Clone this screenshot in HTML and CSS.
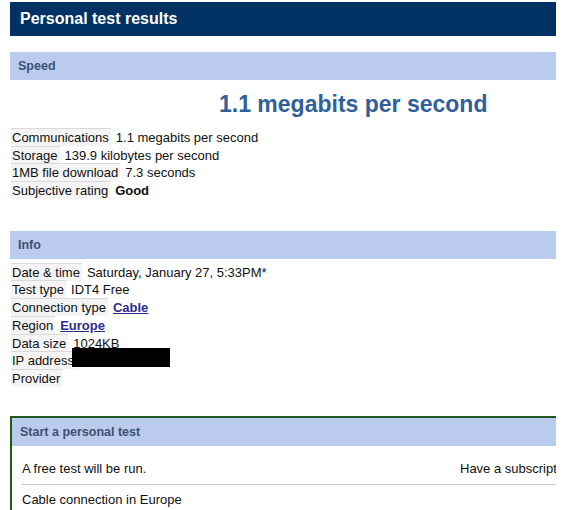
FILE: index.html
```html
<!DOCTYPE html>
<html>
<head>
<meta charset="utf-8">
<link rel="stylesheet" href="styles.css">
</head>
<body>
<div class="page">
  <div class="title">Personal test results</div>

  <div class="section-head">Speed</div>
  <div class="big">1.1 megabits per second</div>
  <div class="rows">
    <div class="row"><span class="label">Communications</span><span class="value">1.1 megabits per second</span></div>
    <div class="row"><span class="label">Storage</span><span class="value">139.9 kilobytes per second</span></div>
    <div class="row"><span class="label">1MB file download</span><span class="value">7.3 seconds</span></div>
    <div class="row"><span class="label">Subjective rating</span><span class="value strong">Good</span></div>
  </div>

  <div class="section-head info-head">Info</div>
  <div class="rows info-rows">
    <div class="row"><span class="label">Date &amp; time</span><span class="value">Saturday, January 27, 5:33PM*</span></div>
    <div class="row"><span class="label">Test type</span><span class="value">IDT4 Free</span></div>
    <div class="row"><span class="label">Connection type</span><span class="value"><a class="link" href="#">Cable</a></span></div>
    <div class="row"><span class="label">Region</span><span class="value"><a class="link" href="#">Europe</a></span></div>
    <div class="row"><span class="label">Data size</span><span class="value">1024KB</span></div>
    <div class="row ip-row"><span class="label">IP address</span><span class="redact"></span></div>
    <div class="row"><span class="label">Provider</span></div>
  </div>

  <div class="start-box">
    <div class="section-head start-head">Start a personal test</div>
    <div class="start-body">
      <div class="start-line first">
        <div class="start-left">A free test will be run.</div>
        <div class="start-right">Have a subscription?</div>
      </div>
      <div class="start-line">
        <div class="start-left">Cable connection in Europe</div>
      </div>
    </div>
  </div>
</div>
</body>
</html>
```

FILE: styles.css
```css
html, body {
  margin: 0;
  padding: 0;
  background: #ffffff;
}

body {
  font-family: "Liberation Sans", Arial, sans-serif;
  font-size: 13px;
  color: #111111;
}

.page {
  margin: 2px 0 0 10px;
  width: 546px;
  height: 508px;
  overflow: hidden;
}

.title {
  background: #023263;
  color: #ffffff;
  font-weight: bold;
  font-size: 16px;
  height: 34px;
  line-height: 34px;
  padding-left: 10px;
}

.section-head {
  margin-top: 16px;
  background: #bacbed;
  color: #3d5273;
  font-weight: bold;
  font-size: 12.5px;
  height: 28px;
  line-height: 28px;
  padding-left: 8px;
}

.big {
  color: #30609a;
  font-weight: bold;
  font-size: 23px;
  line-height: 30px;
  padding: 9px 0 9px 209px;
}

.rows {
  display: flex;
  flex-direction: column;
}

.row {
  position: relative;
  height: 17.7px;
  white-space: nowrap;
}

.label {
  display: inline-block;
  margin-left: 1px;
  padding: 1px 2px 0 1px;
  line-height: 16px;
  background: #f4f4f5;
  border-top: 1px solid #d9d9dc;
  color: #111111;
}

.value {
  margin-left: 5px;
}

.strong {
  font-weight: bold;
}

.link {
  color: #2d2d8e;
  font-weight: bold;
  text-decoration: underline;
}

.info-head {
  margin-top: 32px;
}

.info-rows {
  margin-top: 4px;
}

.redact {
  position: absolute;
  left: 62px;
  top: -3px;
  width: 98px;
  height: 19px;
  background: #000000;
}

.start-box {
  margin-top: 29px;
  width: 620px;
  border-top: 2px solid #1d5a1d;
  border-left: 2px solid #1d5a1d;
}

.start-head {
  margin-top: 0;
}

.start-body {
  padding: 0 10px;
}

.start-line {
  display: flex;
  line-height: 16px;
  padding: 7px 0;
}

.start-line.first {
  padding-top: 15px;
  border-bottom: 1px solid #c6c6c6;
}

.start-left {
  flex: 0 0 438px;
}

.start-right {
  white-space: nowrap;
}
```
